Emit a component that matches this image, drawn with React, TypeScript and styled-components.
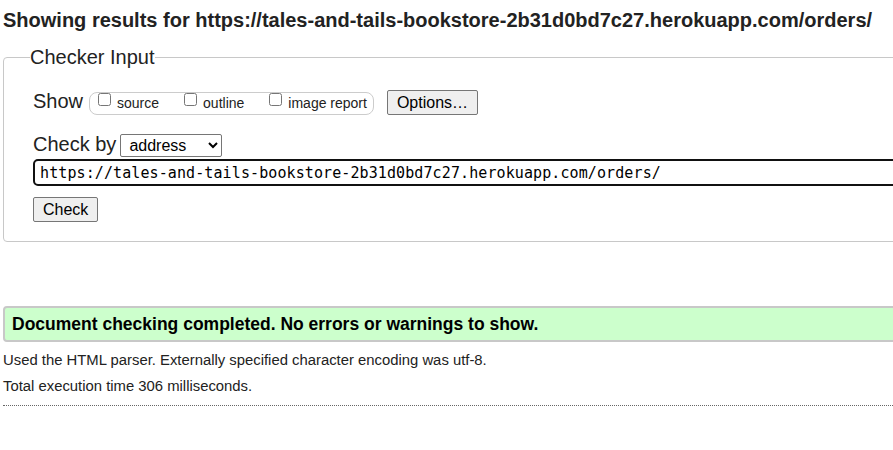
import React from "react";
import styled, { createGlobalStyle } from "styled-components";

const GlobalStyle = createGlobalStyle`
  html, body {
    margin: 0;
    padding: 0;
    overflow: hidden;
    background: #fff;
  }
  body {
    font-family: "Liberation Sans", Arial, sans-serif;
    color: #222;
  }
`;

const Page = styled.div`
  width: 1180px;
  padding: 0 3px;
`;

const Heading = styled.h2`
  margin: 9px 0 0;
  font-size: 20px;
  line-height: 23px;
  font-weight: bold;
  color: #222;
`;

const Fieldset = styled.fieldset`
  margin: 14px 0 0;
  padding: 0 0 19px 29px;
  border: 1px solid #c8c8c8;
  border-radius: 4px;
  min-width: 0;
`;

const Legend = styled.legend`
  padding: 0;
  margin-left: -3px;
  font-size: 20px;
  line-height: 23px;
  color: #222;
`;

const Row = styled.div<{ $top: number }>`
  display: flex;
  align-items: flex-start;
  margin-top: ${(p) => p.$top}px;
`;

const RowLabel = styled.span<{ $gap: number }>`
  font-size: 20px;
  line-height: 23px;
  margin-right: ${(p) => p.$gap}px;
  color: #222;
`;

const Group = styled.div`
  display: flex;
  align-items: flex-start;
  gap: 21px;
  margin-top: 2px;
  height: 21px;
  padding: 0 6px 0 4px;
  border: 1px solid #cccccc;
  border-radius: 8px;
`;

const Option = styled.label`
  display: flex;
  align-items: flex-start;
  font-size: 14px;
  line-height: 21px;
  color: #222;
`;

const Checkbox = styled.input`
  width: 13px;
  height: 13px;
  margin: 0 6px 0 4px;
`;

const Button = styled.button<{ $left?: number }>`
  display: block;
  box-sizing: border-box;
  height: 25px;
  padding: 0 9px;
  margin-left: ${(p) => p.$left ?? 0}px;
  font-family: "Liberation Sans", Arial, sans-serif;
  font-size: 16px;
  color: #000;
  background: #efefef;
  border: 1px solid #767676;
  border-radius: 2px;
`;

const CheckButton = styled(Button)`
  margin-top: 11px;
`;

const Select = styled.select`
  box-sizing: border-box;
  margin-top: 1px;
  width: 102px;
  height: 23px;
  padding: 0 0 0 4px;
  font-family: "Liberation Sans", Arial, sans-serif;
  font-size: 16px;
  color: #000;
  background: #fff;
  border: 1px solid #767676;
  border-radius: 2px;
`;

const UrlInput = styled.input`
  display: block;
  box-sizing: border-box;
  margin-top: 2px;
  width: 1100px;
  height: 27px;
  padding: 0 5px;
  font-family: "DejaVu Sans Mono", "Liberation Mono", monospace;
  font-size: 15px;
  letter-spacing: 0.1px;
  color: #000;
  background: #fff;
  border: 2px solid #111;
  border-radius: 5px;
  outline: none;
`;

const ResultBox = styled.div`
  margin-top: 64px;
  padding: 0 7px;
  font-size: 17.5px;
  line-height: 32px;
  font-weight: bold;
  color: #000;
  background: #ccffcc;
  border: 2px solid #c8c8c8;
  border-radius: 4px;
`;

const Note = styled.p<{ $top: number }>`
  margin: ${(p) => p.$top}px 0 0;
  font-size: 14.85px;
  line-height: 17px;
  color: #222;
`;

const Divider = styled.div`
  margin-top: 10px;
  border-top: 1px dotted #666;
`;

const URL = "https://tales-and-tails-bookstore-2b31d0bd7c27.herokuapp.com/orders/";

export default function App() {
  return (
    <>
      <GlobalStyle />
      <Page>
        <Heading>Showing results for {URL}</Heading>
        <Fieldset>
          <Legend>Checker Input</Legend>
          <Row $top={21}>
            <RowLabel $gap={6}>Show</RowLabel>
            <Group>
              <Option>
                <Checkbox type="checkbox" />
                source
              </Option>
              <Option>
                <Checkbox type="checkbox" />
                outline
              </Option>
              <Option>
                <Checkbox type="checkbox" />
                image report
              </Option>
            </Group>
            <Button type="button" $left={13}>
              Options…
            </Button>
          </Row>
          <Row $top={18}>
            <RowLabel $gap={4}>Check by</RowLabel>
            <Select defaultValue="address">
              <option value="address">address</option>
              <option value="file">file upload</option>
              <option value="text">text input</option>
            </Select>
          </Row>
          <UrlInput type="url" defaultValue={URL} />
          <CheckButton type="button">Check</CheckButton>
        </Fieldset>
        <ResultBox>Document checking completed. No errors or warnings to show.</ResultBox>
        <Note $top={10}>Used the HTML parser. Externally specified character encoding was utf-8.</Note>
        <Note $top={9}>Total execution time 306 milliseconds.</Note>
        <Divider />
      </Page>
    </>
  );
}
